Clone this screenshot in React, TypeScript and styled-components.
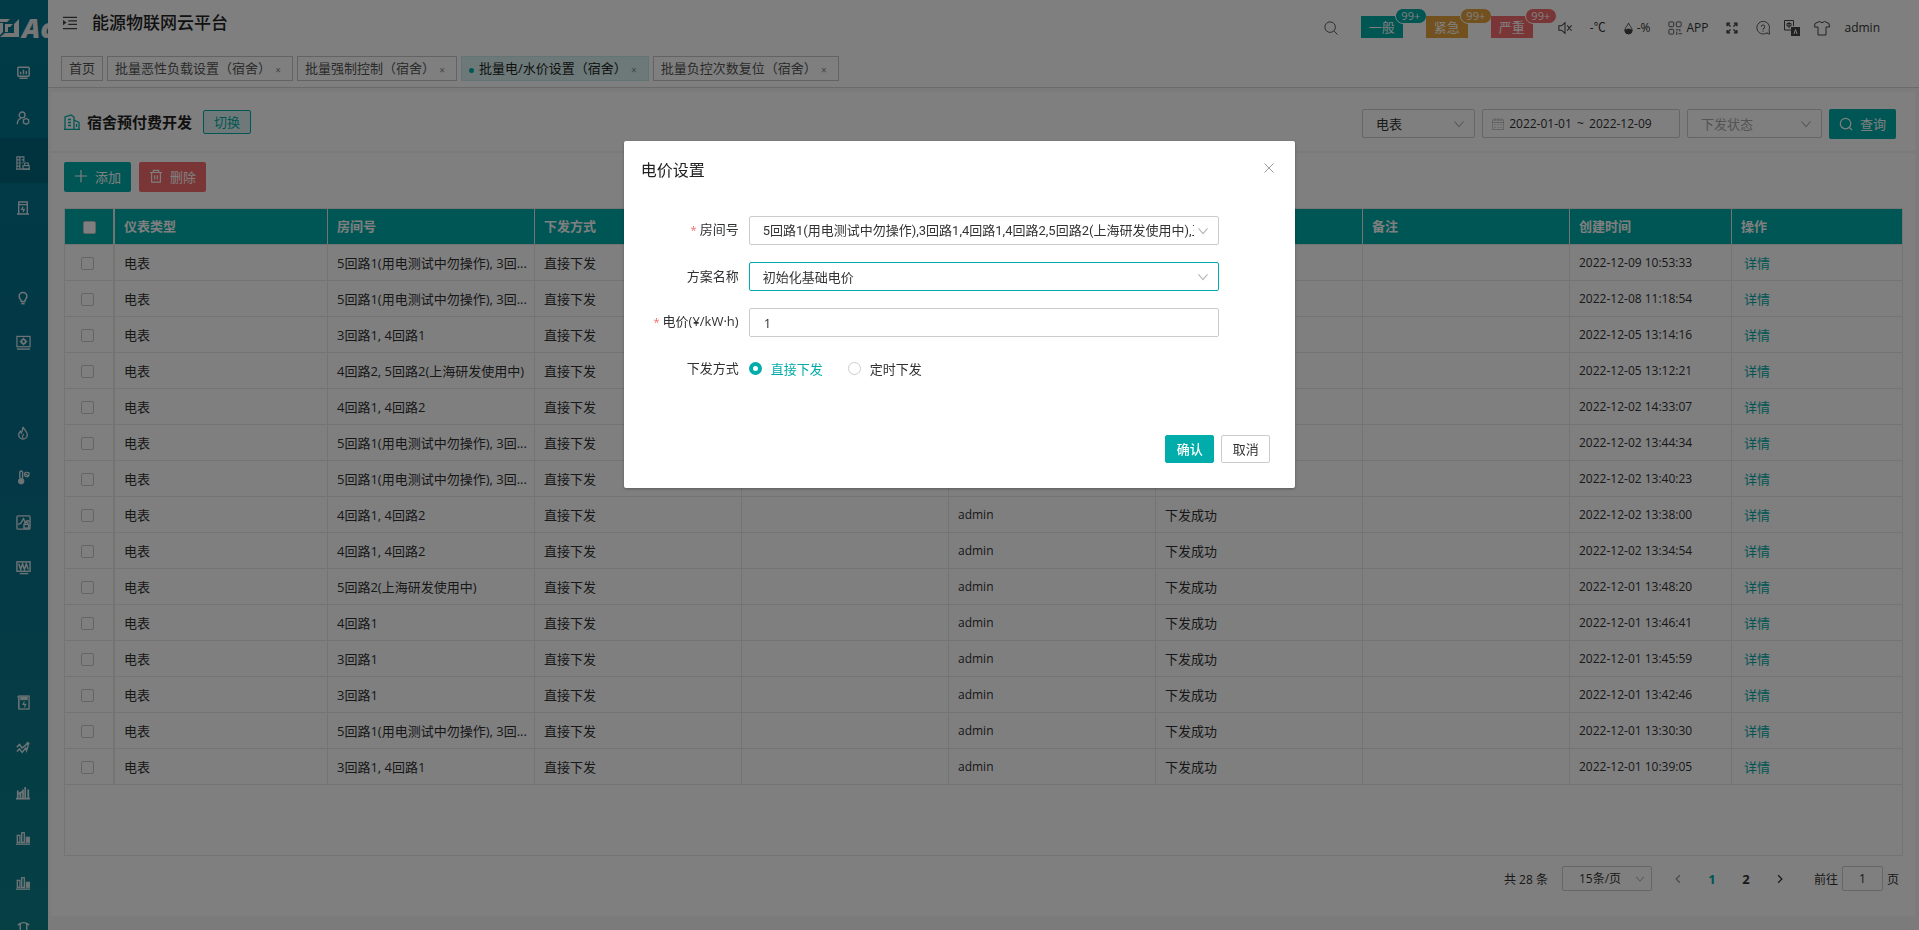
import React from "react";
import styled, { createGlobalStyle, css } from "styled-components";

const teal = "#00adaa";
const line = "#e8e8e8";
const inputLine = "#cccccc";
const uiFont = '"Open Sans", "Noto Sans CJK SC", sans-serif';

const GlobalStyle = createGlobalStyle`
  *, *::before, *::after { box-sizing: border-box; }
  body { margin: 0; background: #f6f6f6; }
  body, button, input, select {
    font-family: ${uiFont};
    font-size: 13px;
    color: #303133;
  }
  button { cursor: pointer; }
`;

/* ---------- frame ---------- */

const Shell = styled.div`
  display: flex;
  height: 100vh;
  overflow: hidden;
`;

const Sidebar = styled.nav`
  flex: none;
  width: 48px;
  overflow: hidden;
  background: linear-gradient(#00768f, #08708c 50%, #0c808a);
`;

const Logo = styled.div`
  display: flex;
  align-items: center;
  gap: 3px;
  height: 48px;
  padding-top: 8px;
  color: #ededed;
  white-space: nowrap;
  font: italic 800 27px/32px "Open Sans", sans-serif;

  svg {
    flex: none;
  }
`;

const NavItem = styled.a<{ $active?: boolean }>`
  display: flex;
  align-items: center;
  justify-content: center;
  height: 45px;
  padding: 4px 2px 0 0;
  color: #d8e8ec;
  background: ${(p) => (p.$active ? "rgba(0, 30, 50, 0.16)" : "transparent")};
`;

const NavSpace = styled.div`
  height: 45px;
`;

const Main = styled.div`
  display: flex;
  flex: 1;
  flex-direction: column;
  min-width: 0;
`;

/* ---------- top bar ---------- */

const TopBar = styled.header`
  background: #fff;
  border-bottom: 1px solid #d4d4d4;
`;

const TopRow = styled.div`
  display: flex;
  align-items: center;
  justify-content: space-between;
  height: 56px;
  padding: 0 39px 0 15px;
`;

const Brand = styled.div`
  display: flex;
  align-items: center;
  gap: 15px;
  padding-bottom: 10px;
`;

const BrandTitle = styled.h1`
  margin: 0;
  font-size: 17px;
  line-height: 24px;
  font-weight: 500;
  color: #222;
`;

const IconButton = styled.button`
  display: flex;
  align-items: center;
  gap: 4px;
  padding: 0;
  border: 0;
  background: none;
  color: #444;
`;

const Tools = styled.div`
  display: flex;
  align-items: center;
  gap: 23px;
`;

const Status = styled.div`
  display: flex;
  align-items: center;
  gap: 18px;
  margin-left: 2px;
  font-size: 12px;
`;

const Account = styled.div`
  display: flex;
  align-items: center;
  gap: 14px;
`;

const SmallText = styled.span`
  font-size: 12px;
  line-height: 16px;
  color: #333;
`;

const Alarm = styled.button<{ $color: string }>`
  position: relative;
  width: 42px;
  height: 22px;
  margin-top: -2px;
  padding: 0;
  border: 0;
  color: #fff;
  line-height: 22px;
  background: ${(p) => p.$color};
`;

const AlarmCount = styled.span<{ $color: string }>`
  position: absolute;
  top: -8px;
  left: 34px;
  width: 32px;
  height: 16px;
  border: 1px solid #fff;
  border-radius: 8px;
  font-size: 11px;
  line-height: 14px;
  background: ${(p) => p.$color};
`;

const Tabs = styled.nav`
  display: flex;
  gap: 4px;
  padding: 0 13px 6px;
`;

const Tab = styled.div<{ $active?: boolean }>`
  display: flex;
  align-items: center;
  height: 25px;
  padding: 0 7px;
  border: 1px solid ${(p) => (p.$active ? "#c4e8e6" : "#c6c6c6")};
  background: ${(p) => (p.$active ? "#d8f2f0" : "#fff")};

  a {
    color: ${(p) => (p.$active ? "#222" : "#555")};
    text-decoration: none;
    line-height: 23px;
    white-space: nowrap;
  }
`;

const TabDot = styled.span`
  width: 5px;
  height: 5px;
  margin: 4px 5px 0 0;
  border-radius: 50%;
  background: ${teal};
`;

const TabClose = styled.button`
  width: 14px;
  padding: 2px 0 0;
  border: 0;
  background: none;
  color: #888;
  font-size: 10px;
  line-height: 12px;
`;

/* ---------- content panel ---------- */

const Panel = styled.main`
  display: flex;
  flex: 1;
  flex-direction: column;
  min-height: 0;
  margin: 4px 4px 14px 3px;
  background: #fff;
`;

const FilterBar = styled.section`
  display: flex;
  align-items: center;
  justify-content: space-between;
  height: 61px;
  padding: 4px 19px 0 13px;
  border-bottom: 2px solid #f5f5f5;
`;

const Project = styled.div`
  display: flex;
  align-items: center;
  gap: 7px;
  padding-bottom: 4px;
  color: ${teal};

  h2 {
    margin: 0 4px 0 0;
    font-size: 15px;
    line-height: 20px;
    color: #222;
  }
`;

const SwitchButton = styled.button`
  height: 24px;
  padding: 0 10px;
  border: 1px solid ${teal};
  border-radius: 2px;
  background: #e0f3f2;
  color: ${teal};
  line-height: 20px;
`;

const Filters = styled.form`
  display: flex;
  align-items: center;
  gap: 7px;
`;

const SelectBox = styled.span<{ $width?: string; $small?: boolean }>`
  position: relative;
  display: block;
  width: ${(p) => p.$width ?? "100%"};
  color: #b4b4b4;

  svg {
    position: absolute;
    top: 50%;
    right: ${(p) => (p.$small ? 6 : 10)}px;
    margin-top: -6px;
    pointer-events: none;
  }
`;

const Select = styled.select<{ $state?: "placeholder" | "focus"; $small?: boolean }>`
  display: block;
  width: 100%;
  height: ${(p) => (p.$small ? 25 : 29)}px;
  padding: 0 24px 0 ${(p) => (p.$small ? 16 : 13)}px;
  border: 1px solid ${(p) => (p.$state === "focus" ? teal : inputLine)};
  border-radius: 2px;
  outline: 0;
  appearance: none;
  background: #fff;
  color: ${(p) => (p.$state === "placeholder" ? "#a8a8a8" : "#333")};
  ${(p) => p.$small && css`font-size: 12px;`}
`;

const RoomSelect = styled(Select)`
  font-family: Roboto, "Noto Sans CJK SC", sans-serif;
`;

const DateRange = styled.div`
  display: flex;
  align-items: center;
  width: 198px;
  height: 29px;
  padding: 0 9px;
  border: 1px solid ${inputLine};
  border-radius: 2px;
  color: #b0b0b0;

  span {
    color: #333;
    font-size: 12px;
  }
`;

const DateInput = styled.input`
  width: 73px;
  padding: 0;
  border: 0;
  outline: 0;
  background: none;
  text-align: center;
  font-size: 12px;
`;

const SolidButton = styled.button<{ $tone?: "danger" }>`
  display: inline-flex;
  align-items: center;
  justify-content: center;
  gap: 7px;
  height: 30px;
  padding: 0 10px;
  border: 0;
  border-radius: 2px;
  background: ${(p) => (p.$tone === "danger" ? "#f56c6c" : teal)};
  color: #fff;
`;

const Actions = styled.div`
  display: flex;
  gap: 8px;
  padding: 9px 13px 16px;

  button {
    padding-bottom: 2px;
  }
`;

/* ---------- table ---------- */

const TableArea = styled.section`
  flex: 1;
  min-height: 0;
  margin: 0 12px 0 13px;
  overflow: hidden;
  border: 1px solid ${line};
`;

const Grid = styled.table`
  width: 100%;
  table-layout: fixed;
  border-collapse: separate;
  border-spacing: 0;

  th, td {
    height: 36px;
    padding: 0 3px 0 9px;
    border-right: 1px solid ${line};
    border-bottom: 1px solid ${line};
    overflow: hidden;
    text-align: left;
    text-overflow: ellipsis;
    white-space: nowrap;
    line-height: 20px;
  }
  th {
    padding-bottom: 2px;
    background: ${teal};
    color: #fff;
    font-weight: 700;
  }
  th:first-child, td:first-child {
    border-right-width: 2px;
    padding: 0;
    text-align: center;
  }
  th:last-child, td:last-child {
    border-right: 0;
  }
`;

const Latin = styled.td`
  font-size: 12px;
`;

const LinkCell = styled.td`
  a {
    margin-left: 3px;
    color: ${teal};
    text-decoration: none;
  }
`;

const Check = styled.input`
  display: inline-block;
  width: 13px;
  height: 13px;
  margin: 0 3px 2px 0;
  border: 1px solid #c8c8c8;
  border-radius: 2px;
  appearance: none;
  background: #fff;
  vertical-align: middle;

  th & {
    margin-right: 0;
  }
`;

/* ---------- pagination ---------- */

const Pager = styled.footer`
  display: flex;
  align-items: center;
  justify-content: flex-end;
  padding: 10px 16px 25px;
  font-size: 12px;
`;

const PageButton = styled.button<{ $current?: boolean }>`
  display: flex;
  align-items: center;
  justify-content: center;
  width: 34px;
  height: 25px;
  padding: 0;
  border: 0;
  background: none;
  font-weight: 700;
  color: ${(p) => (p.$current ? teal : "#303133")};

  &:disabled {
    color: #999;
  }
`;

const PageSize = styled.div`
  margin: 0 9px 0 14px;
`;

const Jump = styled.label`
  display: flex;
  align-items: center;
  gap: 4px;
  margin-left: 17px;

  input {
    width: 41px;
    height: 25px;
    padding: 0;
    border: 1px solid ${inputLine};
    border-radius: 2px;
    text-align: center;
    font-size: 12px;
  }
`;

/* ---------- dialog ---------- */

const Backdrop = styled.div`
  position: fixed;
  inset: 0;
  padding-top: 141px;
  background: rgba(0, 0, 0, 0.5);
`;

const Dialog = styled.section`
  width: 35%;
  min-width: 640px;
  margin: 0 auto;
  border-radius: 2px;
  background: #fff;
  box-shadow: 0 1px 3px rgba(0, 0, 0, 0.3);
`;

const DialogHead = styled.header`
  display: flex;
  align-items: center;
  justify-content: space-between;
  padding: 17px 20px 0 17px;

  h2 {
    margin: 0;
    font-size: 16px;
    line-height: 24px;
    font-weight: 400;
    color: #222;
  }
  button {
    padding-bottom: 4px;
    color: #999;
  }
`;

const DialogForm = styled.form`
  display: grid;
  gap: 17px;
  padding: 34px 76px 0 17px;
`;

const Field = styled.div`
  display: grid;
  grid-template-columns: 98px 1fr;
  column-gap: 10px;
  align-items: center;
  min-height: 29px;
`;

const FieldLabel = styled.label<{ $required?: boolean }>`
  padding-bottom: 2px;
  text-align: right;
  line-height: 20px;
  white-space: nowrap;

  ${(p) =>
    p.$required &&
    css`
      &::before {
        content: "*";
        margin-right: 3px;
        font-size: 11px;
        color: #f56c6c;
      }
    `}
`;

const TextInput = styled.input`
  width: 100%;
  height: 29px;
  padding: 0 14px;
  border: 1px solid ${inputLine};
  border-radius: 2px;
`;

const Radios = styled.div`
  display: flex;
  gap: 25px;
`;

const RadioLabel = styled.label<{ $checked?: boolean }>`
  display: flex;
  align-items: center;
  gap: 9px;
  line-height: 20px;
  color: ${(p) => (p.$checked ? teal : "#303133")};

  input {
    width: 13px;
    height: 13px;
    margin: 0;
    border: 1px solid ${inputLine};
    border-radius: 50%;
    appearance: none;
  }
  input:checked {
    border: 4px solid ${teal};
  }
`;

const DialogFoot = styled.footer`
  display: flex;
  justify-content: flex-end;
  gap: 7px;
  padding: 52px 25px 25px;
`;

const DialogButton = styled.button<{ $primary?: boolean }>`
  width: 49px;
  height: 28px;
  padding: 0;
  border: 1px solid ${(p) => (p.$primary ? teal : inputLine)};
  border-radius: 2px;
  background: ${(p) => (p.$primary ? teal : "#fff")};
  color: ${(p) => (p.$primary ? "#fff" : "#333")};
  font-weight: ${(p) => (p.$primary ? 500 : 400)};
  line-height: 20px;
`;

/* ---------- icons ---------- */

type IconProps = { w?: number; h?: number; box?: string; children: React.ReactNode };

const Icon = ({ w = 14, h = w, box = "0 0 16 16", children }: IconProps) => (
  <svg width={w} height={h} viewBox={box} fill="none" stroke="currentColor" aria-hidden="true">
    {children}
  </svg>
);

const ChevronDown = ({ small }: { small?: boolean }) => (
  <Icon w={12}><path d={small ? "M3 5l5 6 5-6" : "M2 4.500l6 7 6-7"} strokeWidth="1.400" /></Icon>
);

const Monitor = <Icon w={13}><rect x="1" y="1.500" width="14" height="11" rx="1" strokeWidth="1.800" /><path d="M3 15h10M4.500 10V7M8 10V4.500M11.500 10V6" strokeWidth="1.800" /></Icon>;
const UserGear = <Icon w={14}><circle cx="7" cy="4.500" r="3.300" strokeWidth="1.600" /><path d="M1.500 15c0-4 2-6 4.500-6.500" strokeWidth="1.600" /><path d="M11.500 8.500l3 1.700v3.300l-3 1.700-3-1.700v-3.300z" strokeWidth="1.500" /></Icon>;
const BuildingLock = <Icon w={14}><path d="M1 15V1h8v6M4.500 1v14M1 4.500h3M1 8h3M1 11.500h3M6.500 4.500h2M6.500 8h2M0 15h16" strokeWidth="1.300" /><path d="M10 11V8h4v3" strokeWidth="1.300" /><rect x="8" y="11" width="7" height="4" strokeWidth="1.300" /></Icon>;
const Kiosk = <Icon w={12} h={14} box="0 0 14 16"><path d="M2 15V1h10v14M0 15h14M2 4h10" strokeWidth="1.600" /><path d="M7 6.500L5.500 9.500h3L7 12.500" strokeWidth="1.500" /></Icon>;
const Bulb = <Icon w={12} h={14} box="0 0 14 16"><path d="M5 12c0-2-2.500-3-2.500-6a4.500 4.500 0 019 0c0 3-2.500 4-2.500 6z" strokeWidth="1.800" /><path d="M5 14.500h4" strokeWidth="2" /></Icon>;
const ScreenGear = <Icon w={15}><rect x="1" y="1.500" width="14" height="11" strokeWidth="1.300" /><path d="M1 15h14" strokeWidth="1.500" /><circle cx="8" cy="7" r="2.200" strokeWidth="1.800" /><path d="M8 3v1.500M8 9.500V11M4 7h1.500M10.500 7H12" strokeWidth="1.500" /></Icon>;
const Flame = <Icon w={12} h={14} box="0 0 14 16"><path d="M7 1c1 3 5 5 5 9a5 5 0 01-10 0c0-2 1-3 2-4l1 2c1-2 2-4 2-7z" strokeWidth="1.600" /><path d="M7 14c-2-2 0-3 1-5" strokeWidth="1.300" /></Icon>;
const Thermo = <Icon w={13} h={15} box="0 0 14 16"><path d="M3 9V2.500a1.500 1.500 0 013 0V9" strokeWidth="1.500" /><circle cx="4.500" cy="12" r="3" fill="currentColor" /><path d="M8 4c0-2 3-2 5-1 0 3-1 5-3 4-1 0-2-1-2-3zM9 4l4 3" strokeWidth="1.300" /></Icon>;
const ChartLock = <Icon w={15}><rect x="1" y="1" width="14" height="14" rx="1" strokeWidth="1.400" /><path d="M2 10l3-1 3-5 2 4 2-2 3 1" strokeWidth="1.500" /><rect x="8.500" y="10" width="5" height="4" strokeWidth="1.500" /><path d="M9.500 10V8h3v2" strokeWidth="1.300" /></Icon>;
const ScreenWave = <Icon w={15}><rect x="1" y="2" width="14" height="10" strokeWidth="1.500" /><path d="M4 14.500h9" strokeWidth="1.500" /><path d="M3 4l2 6 2-6 2 6 2-6 2 6" strokeWidth="1.600" /></Icon>;
const Meter = <Icon w={13} h={15} box="0 0 14 16"><rect x="2" y="1" width="11" height="14" strokeWidth="1.400" /><path d="M0 2h2v12" /><rect x="4" y="2" width="7" height="3" fill="currentColor" /><path d="M8 7l-1.500 3h3L8 13" strokeWidth="1.200" /></Icon>;
const Trend = <Icon w={14}><path d="M1 7l3-3 3 4 6-5M1 12l3-3 3 4 4-5 1 3 2-6" strokeWidth="1.700" /><circle cx="13.500" cy="3" r="1.500" fill="currentColor" /></Icon>;
const BarsDense = <Icon w={14}><path d="M0 14.500h16" strokeWidth="2" /><path d="M2 14V5M5 14V8M8 14V4M10.500 14V1M14 14V4M3 9l5-3" strokeWidth="2" /></Icon>;
const Bars = <Icon w={14}><path d="M0 15h16" strokeWidth="1.600" /><rect x="1.500" y="5" width="3" height="8" strokeWidth="1.500" /><rect x="6.500" y="2" width="3" height="11" strokeWidth="1.500" /><rect x="11.500" y="7" width="4" height="6" fill="currentColor" /></Icon>;
const Bell = <Icon w={13}><path d="M4 15V4q0-2 4-2t4 2v11M1 5l3-2M15 5l-3-2" strokeWidth="1.800" /></Icon>;

type NavEntry = { label: string; icon: React.ReactNode; active?: boolean } | null;

const nav: NavEntry[] = [
  { label: "dashboard", icon: Monitor },
  { label: "users", icon: UserGear },
  { label: "dormitory", icon: BuildingLock, active: true },
  { label: "charging", icon: Kiosk },
  null,
  { label: "lighting", icon: Bulb },
  { label: "devices", icon: ScreenGear },
  null,
  { label: "fire", icon: Flame },
  { label: "climate", icon: Thermo },
  { label: "safety", icon: ChartLock },
  { label: "waveform", icon: ScreenWave },
  null,
  null,
  { label: "meter", icon: Meter },
  { label: "trend", icon: Trend },
  { label: "statistics", icon: BarsDense },
  { label: "report", icon: Bars },
  { label: "analysis", icon: Bars },
  { label: "alarm", icon: Bell },
];

const tabs = [
  { title: "首页" },
  { title: "批量恶性负载设置（宿舍）", closable: true },
  { title: "批量强制控制（宿舍）", closable: true },
  { title: "批量电/水价设置（宿舍）", closable: true, active: true },
  { title: "批量负控次数复位（宿舍）", closable: true },
];

const alarms = [
  { text: "一般", color: "#00aca6" },
  { text: "紧急", color: "#e6a23c" },
  { text: "严重", color: "#f56c6c" },
];

const many = "5回路1(用电测试中勿操作), 3回...";

const rows: [string, string][] = [
  [many, "2022-12-09 10:53:33"],
  [many, "2022-12-08 11:18:54"],
  ["3回路1, 4回路1", "2022-12-05 13:14:16"],
  ["4回路2, 5回路2(上海研发使用中)", "2022-12-05 13:12:21"],
  ["4回路1, 4回路2", "2022-12-02 14:33:07"],
  [many, "2022-12-02 13:44:34"],
  [many, "2022-12-02 13:40:23"],
  ["4回路1, 4回路2", "2022-12-02 13:38:00"],
  ["4回路1, 4回路2", "2022-12-02 13:34:54"],
  ["5回路2(上海研发使用中)", "2022-12-01 13:48:20"],
  ["4回路1", "2022-12-01 13:46:41"],
  ["3回路1", "2022-12-01 13:45:59"],
  ["3回路1", "2022-12-01 13:42:46"],
  [many, "2022-12-01 13:30:30"],
  ["3回路1, 4回路1", "2022-12-01 10:39:05"],
];

const columnWidths = [50, 213, 207, 207, 207, 207, 207, 207, 162];

/* ---------- sections ---------- */

const SideNav = () => (
  <Sidebar>
    <Logo>
      <svg width="19" height="20" viewBox="0 0 19 20" fill="currentColor" aria-hidden="true">
        <path d="M0 1h10L7 4H0zM0 5h3v9l-3 3zM19 1v18H0l5-4h9V6zM5 6h8l-3 3H8v5H5z" />
      </svg>
      Ac
    </Logo>
    {nav.map((item, i) =>
      item ? (
        <NavItem key={i} href="#" aria-label={item.label} $active={item.active}>
          {item.icon}
        </NavItem>
      ) : (
        <NavSpace key={i} />
      ),
    )}
  </Sidebar>
);

const Header = () => (
  <TopBar>
    <TopRow>
      <Brand>
        <IconButton aria-label="menu">
          <Icon w={14}>
            <path d="M0 1.500h16M6 5.500h10M6 9.500h10M0 14.500h16" strokeWidth="1.300" />
            <path d="M0 4.500v6l4-3z" fill="currentColor" stroke="none" />
          </Icon>
        </IconButton>
        <BrandTitle>能源物联网云平台</BrandTitle>
      </Brand>
      <Tools>
        <IconButton aria-label="search">
          <Icon><circle cx="7" cy="7" r="6" /><path d="M11.500 11.500L15.500 15.500" /></Icon>
        </IconButton>
        {alarms.map((a) => (
          <Alarm key={a.text} $color={a.color}>
            {a.text}
            <AlarmCount $color={a.color}>99+</AlarmCount>
          </Alarm>
        ))}
        <Status>
          <IconButton aria-label="mute">
            <Icon><path d="M1 5.500h3l4-3.500v12l-4-3.500H1zM10.500 5l5 6M15.500 5l-5 6" strokeWidth="1.200" /></Icon>
          </IconButton>
          <SmallText>-℃</SmallText>
          <IconButton as="span">
            <Icon w={9} h={13} box="0 0 10 14"><path d="M5 1C4 4 1 6 1 9a4 4 0 008 0C9 6 6 4 5 1z" /><path d="M1 9q4-3 8 0a4 4 0 01-8 0z" fill="currentColor" /></Icon>
            <SmallText>-%</SmallText>
          </IconButton>
          <IconButton>
            <Icon>
              <rect x="1" y="1" width="5.500" height="5.500" rx="1" /><rect x="9.500" y="1" width="5.500" height="5.500" rx="1" />
              <rect x="1" y="9.500" width="5.500" height="5.500" rx="1" /><path d="M9 10h3M13.500 9v3M10 12v4M12 14.500h4" />
            </Icon>
            <SmallText>APP</SmallText>
          </IconButton>
          <IconButton aria-label="fullscreen">
            <Icon w={12}>
              <path d="M1.500 5.500v-4h4M10.500 1.500h4v4M14.500 10.500v4h-4M5.500 14.500h-4v-4M2 2l4 4M14 2l-4 4M14 14l-4-4M2 14l4-4" strokeWidth="1.900" />
            </Icon>
          </IconButton>
          <Account>
            <IconButton aria-label="help">
              <Icon>
                <path d="M13 13a7.200 7.200 0 112-3l.500 5-3-1" />
                <path d="M6 6.500q0-2 2-2t2 2-2 2.500v1M8 11v1.300" />
              </Icon>
            </IconButton>
            <IconButton aria-label="language">
              <Icon w={16}>
                <path d="M7 10H.500V.500h9V6M5 2v6M3 3.500h4v2.500H3z" />
                <rect x="7" y="7" width="9" height="9" fill="currentColor" stroke="none" />
                <path d="M10 14l1.500-4.500L13 14" stroke="#fff" />
              </Icon>
            </IconButton>
            <IconButton aria-label="theme">
              <Icon w={16}><path d="M5.500 1.500L1 3.500.500 7H4v8h8V7h3.500L15 3.500l-4.500-2Q8 4 5.500 1.500z" /></Icon>
            </IconButton>
            <SmallText>admin</SmallText>
          </Account>
        </Status>
      </Tools>
    </TopRow>
    <Tabs>
      {tabs.map((t) => (
        <Tab key={t.title} $active={t.active}>
          {t.active && <TabDot />}
          <a href="#">{t.title}</a>
          {t.closable && <TabClose aria-label="close">×</TabClose>}
        </Tab>
      ))}
    </Tabs>
  </TopBar>
);

const FilterSection = () => (
  <FilterBar>
    <Project>
      <Icon w={16}>
        <path d="M1 15V3l6-2 3 2v12M10 6l5 2.500V15M0 15.300h16M4 5.500h3M4 8.500h3M4 11.500h3M12.500 10v3" strokeWidth="1.300" />
      </Icon>
      <h2>宿舍预付费开发</h2>
      <SwitchButton>切换</SwitchButton>
    </Project>
    <Filters>
      <SelectBox $width="113px">
        <Select aria-label="type"><option>电表</option></Select>
        <ChevronDown />
      </SelectBox>
      <DateRange>
        <Icon w={12}>
          <path d="M.500 2.500h15v13H.500zM.500 6h15M4 0v4M8 0v4M12 0v4M3 9h2M7 9h2M11 9h2M3 12.500h2M7 12.500h2M11 12.500h2" />
        </Icon>
        <DateInput aria-label="start" defaultValue="2022-01-01" />
        <span>~</span>
        <DateInput aria-label="end" defaultValue="2022-12-09" />
      </DateRange>
      <SelectBox $width="135px">
        <Select aria-label="status" $state="placeholder"><option>下发状态</option></Select>
        <ChevronDown />
      </SelectBox>
      <SolidButton type="button">
        <Icon><circle cx="7.500" cy="7.500" r="6" strokeWidth="1.400" /><path d="M12 12l3 3" strokeWidth="1.400" /></Icon>
        查询
      </SolidButton>
    </Filters>
  </FilterBar>
);

const Records = () => (
  <TableArea>
    <Grid>
      <colgroup>
        {columnWidths.map((w, i) => <col key={i} width={w} />)}
        <col />
      </colgroup>
      <thead>
        <tr>
          <th><Check type="checkbox" aria-label="all" /></th>
          <th>仪表类型</th>
          <th>房间号</th>
          <th>下发方式</th>
          <th />
          <th />
          <th />
          <th>备注</th>
          <th>创建时间</th>
          <th>操作</th>
        </tr>
      </thead>
      <tbody>
        {rows.map(([room, time]) => (
          <tr key={time}>
            <td><Check type="checkbox" aria-label={time} /></td>
            <td>电表</td>
            <td>{room}</td>
            <td>直接下发</td>
            <td />
            <Latin>admin</Latin>
            <td>下发成功</td>
            <td />
            <Latin>{time}</Latin>
            <LinkCell><a href="#">详情</a></LinkCell>
          </tr>
        ))}
      </tbody>
    </Grid>
  </TableArea>
);

const Pagination = () => (
  <Pager>
    <span>共 28 条</span>
    <PageSize>
      <SelectBox $width="90px" $small>
        <Select $small aria-label="page size"><option>15条/页</option></Select>
        <ChevronDown small />
      </SelectBox>
    </PageSize>
    <PageButton aria-label="previous" disabled><Icon w={10}><path d="M11 2L5 8l6 6" strokeWidth="2" /></Icon></PageButton>
    <PageButton $current>1</PageButton>
    <PageButton>2</PageButton>
    <PageButton aria-label="next"><Icon w={10}><path d="M5 2l6 6-6 6" strokeWidth="2" /></Icon></PageButton>
    <Jump>
      前往
      <input defaultValue="1" />
      页
    </Jump>
  </Pager>
);

const PriceDialog = () => (
  <Backdrop>
    <Dialog role="dialog" aria-labelledby="dialog-title">
      <DialogHead>
        <h2 id="dialog-title">电价设置</h2>
        <IconButton aria-label="close"><Icon w={12}><path d="M2 2l12 12M14 2L2 14" strokeWidth="1.300" /></Icon></IconButton>
      </DialogHead>
      <DialogForm>
        <Field>
          <FieldLabel htmlFor="room" $required>房间号</FieldLabel>
          <SelectBox>
            <RoomSelect id="room">
              <option>5回路1(用电测试中勿操作),3回路1,4回路1,4回路2,5回路2(上海研发使用中),五回路</option>
            </RoomSelect>
            <ChevronDown />
          </SelectBox>
        </Field>
        <Field>
          <FieldLabel htmlFor="plan">方案名称</FieldLabel>
          <SelectBox>
            <Select id="plan" $state="focus"><option>初始化基础电价</option></Select>
            <ChevronDown />
          </SelectBox>
        </Field>
        <Field>
          <FieldLabel htmlFor="price" $required>电价(¥/kW·h)</FieldLabel>
          <TextInput id="price" defaultValue="1" />
        </Field>
        <Field>
          <FieldLabel as="span">下发方式</FieldLabel>
          <Radios>
            <RadioLabel $checked><input type="radio" name="mode" defaultChecked />直接下发</RadioLabel>
            <RadioLabel><input type="radio" name="mode" />定时下发</RadioLabel>
          </Radios>
        </Field>
      </DialogForm>
      <DialogFoot>
        <DialogButton $primary>确认</DialogButton>
        <DialogButton>取消</DialogButton>
      </DialogFoot>
    </Dialog>
  </Backdrop>
);

export default function App() {
  return (
    <>
      <GlobalStyle />
      <Shell>
        <SideNav />
        <Main>
          <Header />
          <Panel>
            <FilterSection />
            <Actions>
              <SolidButton>
                <Icon><path d="M8 1v14M1 8h14" strokeWidth="1.300" /></Icon>
                添加
              </SolidButton>
              <SolidButton $tone="danger">
                <Icon><path d="M1 4h14M5 4V1.500h6V4M3 4v11h10V4M6.500 7v5M9.500 7v5" strokeWidth="1.300" /></Icon>
                删除
              </SolidButton>
            </Actions>
            <Records />
            <Pagination />
          </Panel>
        </Main>
      </Shell>
      <PriceDialog />
    </>
  );
}
